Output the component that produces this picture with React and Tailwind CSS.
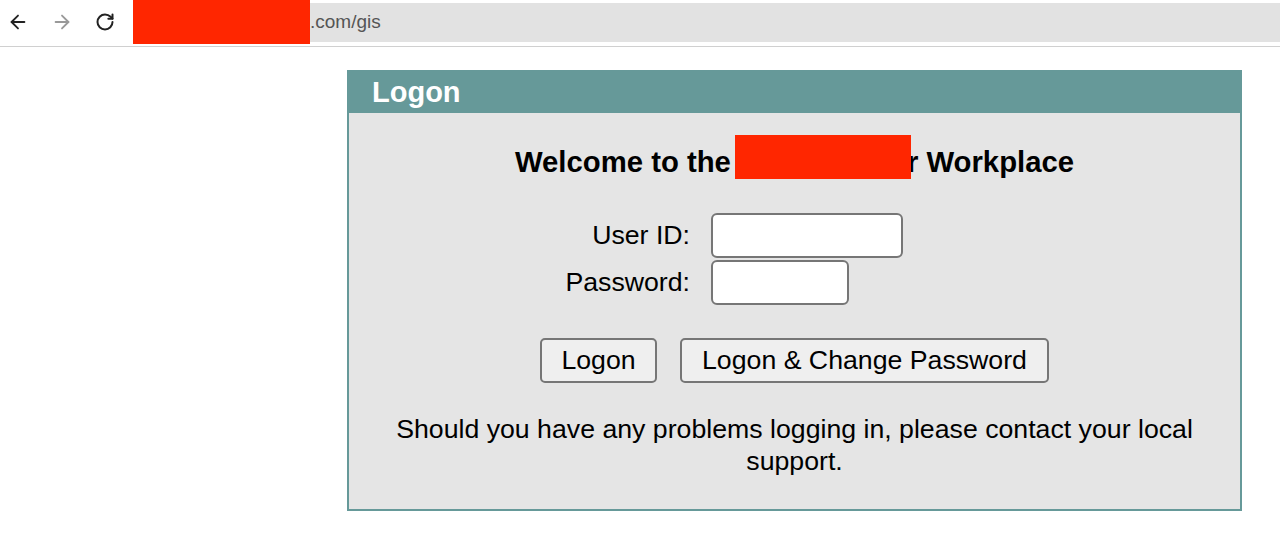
import { ArrowLeft, ArrowRight, RotateCw } from 'lucide-react'

function BrowserBar() {
    return (
        <div className="flex h-[47px] items-start border-b border-[#d0d0d0] bg-white">
            <div className="flex h-[44px] items-center gap-[22px] pl-[7px] pr-[18px]">
                <ArrowLeft size={22} strokeWidth={2} className="text-[#222]" />
                <ArrowRight size={22} strokeWidth={2} className="text-[#999]" />
                <RotateCw size={20} strokeWidth={2.4} className="text-[#222]" />
            </div>
            <div className="flex h-[44px] flex-1 items-start">
                {/* redacted domain */}
                <div className="h-[44px] w-[177px] bg-[#ff2600]" />
                <div className="mt-[3px] flex h-[39px] flex-1 items-center bg-[#e2e2e2] text-[19px] text-[#555]">
                    .com/gis
                </div>
            </div>
        </div>
    )
}

export default function App() {
    return (
        <div className="min-h-screen bg-white font-['Liberation_Sans',Arial,sans-serif] text-black">
            <BrowserBar />
            <div className="pl-[347px] pt-[23px]">
                <div className="w-[895px] border-2 border-[#669999] bg-[#e5e5e5]">
                    <div className="h-[41px] bg-[#669999] pl-[23px] text-[29px] font-bold leading-[41px] text-white">
                        Logon
                    </div>
                    <div className="flex flex-col items-center pt-[22px] pb-[32px] text-[26.7px]">
                        <h2 className="flex h-[44px] items-end text-[29.3px] font-bold leading-[34px]">
                            <span>Welcome to the</span>
                            <span className="relative z-10 -mr-[4px] ml-[4px] inline-block h-[44px] w-[176px] bg-[#ff2600]" />
                            <span>r Workplace</span>
                        </h2>

                        <div className="mt-[34px] grid grid-cols-[144px_311px] gap-y-[2px]">
                            <label className="flex items-center justify-end pr-[21px]">User ID:</label>
                            <input type="text" className="h-[45px] w-[192px] rounded-[6px] border-2 border-[#767676] bg-white" />
                            <label className="flex items-center justify-end pr-[21px]">Password:</label>
                            <input type="password" className="h-[45px] w-[138px] rounded-[6px] border-2 border-[#767676] bg-white" />
                        </div>

                        <div className="mt-[33px] flex gap-[23px]">
                            <button className="h-[45px] w-[117px] rounded-[5px] border-2 border-[#767676] bg-[#efefef]">
                                Logon
                            </button>
                            <button className="h-[45px] w-[369px] rounded-[5px] border-2 border-[#767676] bg-[#efefef]">
                                Logon &amp; Change Password
                            </button>
                        </div>

                        <p className="mt-[30px] px-[40px] text-center leading-[32px]">
                            Should you have any problems logging in, please contact your local support.
                        </p>
                    </div>
                </div>
            </div>
        </div>
    )
}
